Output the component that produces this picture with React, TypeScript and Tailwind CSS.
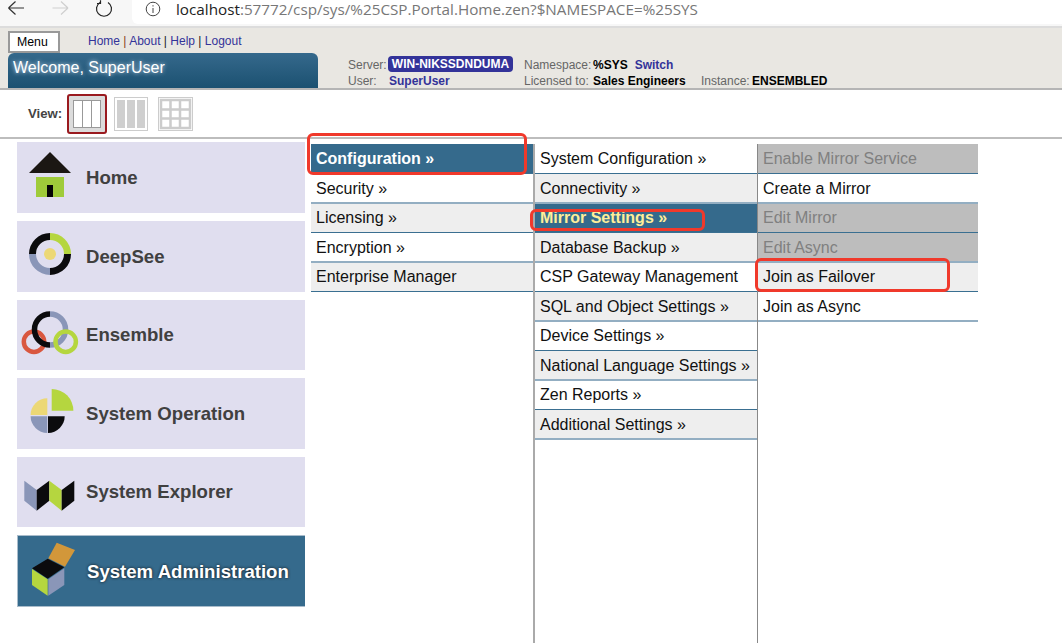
import React from "react";

const font = { fontFamily: '"Liberation Sans", Arial, sans-serif' };

function Arc({ cx, cy, r, a0, a1, color, w }: { cx: number; cy: number; r: number; a0: number; a1: number; color: string; w: number }) {
  const p = (a: number) => [cx + r * Math.cos((a * Math.PI) / 180), cy + r * Math.sin((a * Math.PI) / 180)];
  const [x0, y0] = p(a0);
  const [x1, y1] = p(a1);
  return <path d={`M${x0} ${y0}A${r} ${r} 0 ${a1 - a0 > 180 ? 1 : 0} 1 ${x1} ${y1}`} fill="none" stroke={color} strokeWidth={w} />;
}

const K = "#0b0b0d";
const G = "#b5d63f";
const B = "#8a96b8";
const Y = "#ecd876";

const icons: Record<string, React.ReactNode> = {
  home: (
    <>
      <path d="M30 3L51 24H9Z" fill="#1b1713" />
      <rect x="16" y="28" width="28" height="20" fill="#9fcb3a" />
      <rect x="27" y="36" width="6" height="12" fill="#050505" />
    </>
  ),
  deep: (
    <>
      <Arc cx={30} cy={26} r={17.5} a0={-90} a1={0} color={G} w={7} />
      <Arc cx={30} cy={26} r={17.5} a0={0} a1={90} color={K} w={7} />
      <Arc cx={30} cy={26} r={17.5} a0={90} a1={180} color={B} w={7} />
      <Arc cx={30} cy={26} r={17.5} a0={180} a1={270} color={K} w={7} />
      <circle cx="30" cy="26" r="6" fill={Y} />
    </>
  ),
  ens: (
    <>
      <Arc cx={30} cy={22.5} r={15.5} a0={-90} a1={90} color={B} w={5.5} />
      <circle cx="14" cy="34.7" r="10.2" fill="none" stroke="#d9573f" strokeWidth="4.5" />
      <circle cx="45.7" cy="34.7" r="10.2" fill="none" stroke={G} strokeWidth="4.5" />
      <Arc cx={30} cy={22.5} r={15.5} a0={90} a1={270} color={K} w={5.5} />
    </>
  ),
  op: (
    <>
      <path d="M31.7 25.7V4A21.7 21.7 0 0 1 53.4 25.7Z" fill={G} />
      <path d="M27.3 30V13.3A16.7 16.7 0 0 0 10.6 30Z" fill={Y} />
      <path d="M27.3 31.2H10.6A16.7 16.7 0 0 0 27.3 47.9Z" fill={B} />
      <path d="M28 31.2V47.9A16.7 16.7 0 0 0 44.7 31.2Z" fill={K} />
    </>
  ),
  exp: (
    <>
      <path d="M4.3 16.7L16.7 26V46.7L4.3 36.7Z" fill={B} />
      <path d="M16.7 26L29.3 16.7V36.7L16.7 46.7Z" fill={K} />
      <path d="M29.3 16.7L41.7 26V46.7L29.3 36.7Z" fill={G} />
      <path d="M41.7 26L54.3 16.7V36.7L41.7 46.7Z" fill={K} />
    </>
  ),
  adm: (
    <>
      <path d="M36.7 .7L55 8L45 24.7L28.3 16.3Z" fill="#d2973a" />
      <path d="M27.7 16.7L44.3 25.3L27.7 36.7L12 26.3Z" fill={K} />
      <path d="M12 27L27.7 37.3V53.7L12 43Z" fill={G} />
      <path d="M28.3 37.3L44.3 26.3V43L28.3 53.7Z" fill={B} />
    </>
  ),
};

const side = [
  { k: "home", t: "Home", h: "h-[71px]", tp: "pt-[1px]" },
  { k: "deep", t: "DeepSee", h: "h-[71px]", tp: "" },
  { k: "ens", t: "Ensemble", h: "h-[70px]", tp: "" },
  { k: "op", t: "System Operation", h: "h-[71px]", tp: "" },
  { k: "exp", t: "System Explorer", h: "h-[70px]", tp: "" },
];

function SideItem({ k, t, h, tp, active }: { k: string; t: string; h: string; tp: string; active?: boolean }) {
  return (
    <div className={`${h} w-[288px] flex items-center ${active ? "bg-[#356a8c] border-t border-l border-b border-[#a9bccb]" : "bg-[#e0deef]"}`}>
      <svg viewBox="0 0 56 56" className={`w-14 h-14 shrink-0 self-start overflow-visible ${active ? "ml-[2px] mt-[6px]" : "ml-[3px] mt-[7px]"}`}>
        {icons[k]}
      </svg>
      <span
        className={`${tp} text-[18.600px] font-bold ${active ? "ml-[11px] text-white [text-shadow:0_0_3px_#111]" : "ml-[10px] text-[#404040]"}`}
      >
        {t}
      </span>
    </div>
  );
}

type Row = { t: string; s?: "sel" | "selY" | "off" };

function Col({ rows, cls, invert }: { rows: Row[]; cls: string; invert?: boolean }) {
  return (
    <div className={cls}>
      {rows.map((r, i) => {
        const odd = i % 2 === 0;
        const white = invert ? !odd : odd;
        const h = i === 0 || odd === false ? "h-[30px]" : "h-[29px]";
        const bg =
          r.s === "sel" || r.s === "selY"
            ? "bg-[#356a8c]"
            : r.s === "off"
              ? "bg-[#bdbdbd]"
              : white
                ? "bg-white"
                : "bg-[#eeeeee]";
        const bd = odd ? "border-b border-[#3a6f91]" : "border-b-2 border-[#93aec2] pt-[2px]";
        const fg =
          r.s === "sel"
            ? "text-white font-bold"
            : r.s === "selY"
              ? "text-[#ffee99] font-bold"
              : r.s === "off"
                ? "text-[#808080]"
                : "text-[#111]";
        return (
          <div key={r.t} className={`${h} ${bg} ${bd} ${fg} flex items-center pl-[5px] text-[16px] whitespace-nowrap`}>
            {r.t}
          </div>
        );
      })}
    </div>
  );
}

const col1: Row[] = [
  { t: "Configuration »", s: "sel" },
  { t: "Security »" },
  { t: "Licensing »" },
  { t: "Encryption »" },
  { t: "Enterprise Manager" },
];
const col2: Row[] = [
  { t: "System Configuration »" },
  { t: "Connectivity »" },
  { t: "Mirror Settings »", s: "selY" },
  { t: "Database Backup »" },
  { t: "CSP Gateway Management" },
  { t: "SQL and Object Settings »" },
  { t: "Device Settings »" },
  { t: "National Language Settings »" },
  { t: "Zen Reports »" },
  { t: "Additional Settings »" },
];
const col3: Row[] = [
  { t: "Enable Mirror Service", s: "off" },
  { t: "Create a Mirror" },
  { t: "Edit Mirror", s: "off" },
  { t: "Edit Async", s: "off" },
  { t: "Join as Failover" },
  { t: "Join as Async" },
];

export default function App() {
  return (
    <div className="relative w-[1062px] h-[643px] overflow-hidden bg-white" style={font}>
      {/* browser bar */}
      <div className="h-[28px] bg-[#f7f7f7] border-b-2 border-[#dcdcdc] flex">
        <div className="w-[132px] flex items-start">
          <svg viewBox="0 0 132 24" className="w-[132px] h-6" fill="none">
            <path d="M8.5 8H24M8.5 8L15.5 1.5M8.5 8L15.5 14.500" stroke="#333" strokeWidth="1.2" />
            <path d="M68 8H52.500M68 8L61 1.5M68 8L61 14.500" stroke="#cfcfcf" strokeWidth="1.2" />
            <path d="M100 2.400A7.500 7.500 0 1 0 108 2.400" stroke="#222" strokeWidth="1.2" />
            <path d="M100.500 .2V3.500H97" stroke="#222" strokeWidth="1.2" />
          </svg>
        </div>
        <div className="flex-1 h-[24px] bg-white rounded-bl-md flex items-start">
          <svg viewBox="0 0 16 16" className="w-4 h-4 ml-[13px] mt-[1px] shrink-0" fill="none">
            <circle cx="8" cy="8" r="6.800" stroke="#444" strokeWidth="1" />
            <path d="M8 7V12M8 4.200V5.500" stroke="#444" strokeWidth="1" />
          </svg>
          <div className="ml-[15px] text-[15.250px] leading-[18px] whitespace-nowrap text-[#777]" style={{ fontFamily: '"Open Sans", sans-serif' }}>
            <span className="text-[#222]">localhost</span>:57772/csp/sys/%25CSP.Portal.Home.zen?$NAMESPACE=%25SYS
          </div>
        </div>
      </div>

      {/* header */}
      <div className="h-[62px] bg-[#e9e7e2] border-b-2 border-[#b5b5b5] flex">
        <div className="w-[348px] pl-2 shrink-0">
          <div className="flex h-[25px] pt-[3px]">
            <div className="w-[52px] h-[22px] bg-white border-2 border-[#999] flex items-center pl-[7px] text-[12.300px] text-black">Menu</div>
            <div className="ml-[28px] text-[12px] leading-[20px] text-[#333399]">
              Home <span className="text-[#884422]">|</span> About <span className="text-[#222]">|</span> Help <span className="text-[#222]">|</span> Logout
            </div>
          </div>
          <div className="w-[310px] h-[35px] rounded-t-md bg-gradient-to-b from-[#35698c] to-[#1b5171] pl-[5px] pt-[4px] text-[16px] leading-[22px] text-white [text-shadow:0_0_4px_#cde]">
            Welcome, SuperUser
          </div>
        </div>
        <div className="grid grid-cols-[40px_136px_69px_108px_51px_auto] grid-rows-[17px_16px] mt-[28px] text-[12px] leading-[16px] text-[#666] whitespace-nowrap">
          <div className="pt-[1px]">Server:</div>
          <div>
            <span className="block w-[125px] h-[16px] rounded-sm bg-[#333399] text-white font-bold text-center leading-[16px]">WIN-NIKSSDNDUMA</span>
          </div>
          <div className="pt-[1px]">Namespace:</div>
          <div className="pt-[1px] font-bold text-black">
            %SYS<span className="ml-[7px] text-[#333399]">Switch</span>
          </div>
          <div />
          <div />
          <div>User:</div>
          <div className="pl-px font-bold text-[#333399]">SuperUser</div>
          <div>Licensed to:</div>
          <div className="font-bold text-black">Sales Engineers</div>
          <div>Instance:</div>
          <div className="font-bold text-black">ENSEMBLED</div>
        </div>
      </div>

      {/* view row */}
      <div className="h-[49px] border-b-2 border-[#bdbdbd] flex items-center pl-[28px]">
        <span className="text-[13.200px] font-bold text-[#444] w-[39px]">View:</span>
        <svg viewBox="0 0 40 40" className="w-10 h-10">
          <rect x="1" y="1" width="38" height="38" rx="2" fill="#dcdcdc" stroke="#9a1a1f" strokeWidth="2" />
          <rect x="6.500" y="6.500" width="27" height="27" fill="#fff" stroke="#999" />
          <path d="M15.500 6.500V33.500M24.500 6.500V33.500" stroke="#999" />
        </svg>
        <svg viewBox="0 0 34 34" className="w-[34px] h-[34px] ml-[7px]">
          <rect x=".5" y=".5" width="33" height="33" fill="#fff" stroke="#ccc" />
          <rect x="3" y="3" width="8" height="28" fill="#cfcfcf" />
          <rect x="13" y="3" width="8" height="28" fill="#cfcfcf" />
          <rect x="23" y="3" width="8" height="28" fill="#cfcfcf" />
        </svg>
        <svg viewBox="0 0 35 34" className="w-[35px] h-[34px] ml-[10px]" fill="#fff" stroke="#ccc">
          <rect x=".5" y=".5" width="34" height="33" />
          <path strokeWidth="2.500" d="M3 3H32V31H3ZM3 12.500H32M3 21.500H32M12.500 3V31M22 3V31" />
        </svg>
      </div>

      {/* content */}
      <div className="flex h-[504px]">
        <div className="w-[311px] shrink-0 pl-[17px] pt-[3px] flex flex-col gap-2">
          {side.map((s) => (
            <SideItem key={s.k} {...s} />
          ))}
          <SideItem k="adm" t="System Administration" h="h-[72px]" tp="pt-[1px]" active />
        </div>
        <div className="flex pt-[5px] h-full">
          <Col rows={col1} invert cls="w-[222px]" />
          <Col rows={col2} cls="w-[224px] h-full border-l-2 border-[#aaaaaa]" />
          <Col rows={col3} invert cls="w-[221px] h-full border-l border-[#888888]" />
        </div>
      </div>

      {/* annotations */}
      <div className="absolute left-[307px] top-[133px] w-[220px] h-[42px] rounded-[6px] border-[3px] border-[#f0392b]" />
      <div className="absolute left-[530px] top-[209px] w-[175px] h-[22px] rounded-[6px] border-[3px] border-[#f0392b]" />
      <div className="absolute left-[755px] top-[258px] w-[195px] h-[34px] rounded-[6px] border-[3px] border-[#f0392b]" />
    </div>
  );
}
